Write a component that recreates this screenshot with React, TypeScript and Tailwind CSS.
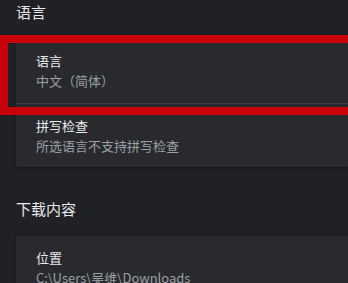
const font = { fontFamily: '"Noto Sans CJK SC", Roboto, "Noto Sans", sans-serif' };

function Row({ title, sub, divider }: { title: string; sub: string; divider?: boolean }) {
  return (
    <div className={`h-16 flex flex-col justify-center pl-5 ${divider ? 'border-t border-[#3f4245]' : ''}`}>
      <div className="text-[13px] leading-5 text-[#e8eaed]">{title}</div>
      <div className="text-[13px] leading-5 text-[#9aa0a6]">{sub}</div>
    </div>
  );
}

export default function App() {
  return (
    <div className="relative w-[348px] h-[283px] overflow-hidden bg-[#202124]" style={font}>
      {/* 语言 */}
      <div className="pt-[2px]">
        <h2 className="pl-4 text-[15px] leading-5 text-[#e8eaed] mb-[17px]">语言</h2>
        <div className="ml-4 bg-[#292a2d] shadow-[0_1px_2px_rgba(0,0,0,0.4)]">
          <Row title="语言" sub="中文（简体）" />
          <Row title="拼写检查" sub="所选语言不支持拼写检查" divider />
        </div>
      </div>

      {/* 下载内容 */}
      <div className="mt-8">
        <h2 className="pl-4 text-[15px] leading-5 text-[#e8eaed] mb-[17px]">下载内容</h2>
        <div className="ml-4 bg-[#292a2d] shadow-[0_1px_2px_rgba(0,0,0,0.4)]">
          <Row title="位置" sub="C:\Users\吴维\Downloads" />
        </div>
      </div>

      {/* annotation box */}
      <div className="absolute left-0 top-[35px] w-[370px] h-[80px] border-[8px] border-[#c8000a]" />
    </div>
  );
}
